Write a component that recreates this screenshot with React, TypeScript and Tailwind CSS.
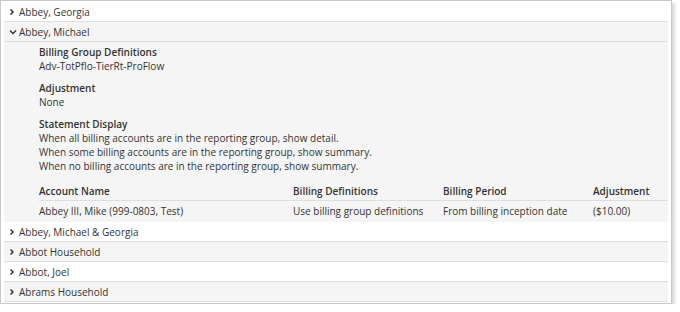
import React from "react";

type Row = { name: string; shaded: boolean };

const before: Row[] = [{ name: "Abbey, Georgia", shaded: false }];
const after: Row[] = [
  { name: "Abbey, Michael & Georgia", shaded: false },
  { name: "Abbot Household", shaded: true },
  { name: "Abbot, Joel", shaded: false },
  { name: "Abrams Household", shaded: true },
];

function Chevron({ open = false }: { open?: boolean }) {
  return (
    <svg width="9" height="10" viewBox="0 0 9 10" className="shrink-0" aria-hidden>
      {open ? (
        <path d="M1 3.5 L4 6.5 L7 3.5" fill="none" stroke="#333" strokeWidth="1.4" />
      ) : (
        <path d="M1.5 2.5 L4 5 L1.5 7.5" fill="none" stroke="#333" strokeWidth="1.5" />
      )}
    </svg>
  );
}

function HeaderRow({ name, shaded, open }: Row & { open?: boolean }) {
  return (
    <div
      className={`flex h-[20px] items-center border-b border-[#dedede] pl-[5px] ${
        shaded ? "bg-[#f5f5f5]" : "bg-white"
      }`}
    >
      <Chevron open={open} />
      <span className="ml-px">{name}</span>
    </div>
  );
}

function Field({ label, children }: { label: string; children: React.ReactNode }) {
  return (
    <div>
      <p className="font-semibold">{label}</p>
      {children}
    </div>
  );
}

export default function App() {
  return (
    <div className="bg-white text-[10px] leading-[14px] text-[#333]" style={{ fontFamily: "'Open Sans', sans-serif" }}>
      <div className="h-[304px] w-[672px] border border-[#c8c8c8] bg-white px-[3px] pt-px pb-px shadow-[3px_3px_3px_rgba(0,0,0,0.15)]">
        {before.map((r) => (
          <HeaderRow key={r.name} {...r} />
        ))}
        <HeaderRow name="Abbey, Michael" shaded open />
        <div className="flex h-[180px] flex-col gap-[8px] bg-[#f5f5f5] pt-[3px] pl-[35px]">
          <Field label="Billing Group Definitions">
            <p>Adv-TotPflo-TierRt-ProFlow</p>
          </Field>
          <Field label="Adjustment">
            <p>None</p>
          </Field>
          <Field label="Statement Display">
            <p>When all billing accounts are in the reporting group, show detail.</p>
            <p>When some billing accounts are in the reporting group, show summary.</p>
            <p>When no billing accounts are in the reporting group, show summary.</p>
          </Field>
          <div>
            <div className="grid h-[20px] grid-cols-[254px_150px_150px_1fr] items-center border-b border-[#dedede] font-semibold">
              <span>Account Name</span>
              <span>Billing Definitions</span>
              <span>Billing Period</span>
              <span>Adjustment</span>
            </div>
            <div className="grid h-[20px] grid-cols-[254px_150px_150px_1fr] items-center">
              <span>Abbey III, Mike (999-0803, Test)</span>
              <span>Use billing group definitions</span>
              <span>From billing inception date</span>
              <span>($10.00)</span>
            </div>
          </div>
        </div>
        {after.map((r) => (
          <HeaderRow key={r.name} {...r} />
        ))}
      </div>
    </div>
  );
}
